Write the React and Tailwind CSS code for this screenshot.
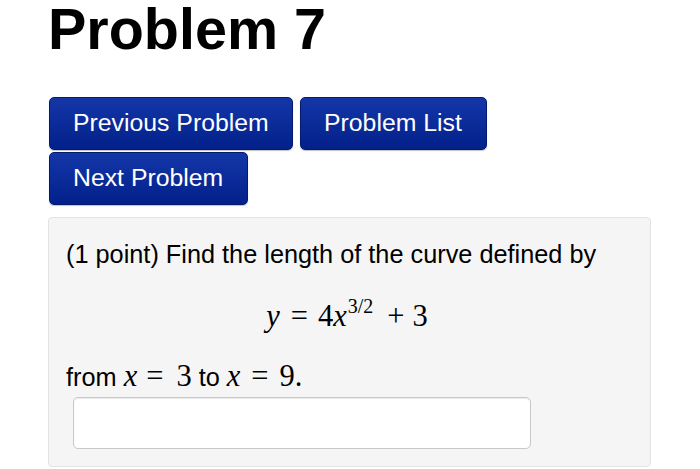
export default function App() {
  const btn =
    "h-[53px] px-[23px] rounded-[5px] border border-[#021a70] bg-gradient-to-b from-[#1436a8] to-[#03208a] text-white text-[24.8px] leading-none shadow-[0_1px_1px_rgba(0,0,0,0.25)]";
  const math = "font-['Liberation_Serif','Times_New_Roman',serif] text-[30.5px]";
  return (
    <div className="w-[700px] h-[469px] bg-white overflow-hidden font-['Liberation_Sans',Arial,sans-serif]">
      <h1 className="pl-[48px] text-[57.5px] font-bold leading-[58px] text-black">Problem 7</h1>

      <div className="pl-[49px] mt-[39px] flex flex-col gap-[2px]">
        <div className="flex gap-[7px]">
          <button className={btn + " w-[244px] text-left"}>Previous Problem</button>
          <button className={btn + " w-[187px] text-left"}>Problem List</button>
        </div>
        <div className="flex">
          <button className={btn + " w-[199px] text-left"}>Next Problem</button>
        </div>
      </div>

      <div className="ml-[48px] mt-[12px] w-[603px] h-[250px] rounded-[4px] border border-[#e3e3e3] bg-[#f5f5f5] pl-[17px] pt-[22px]">
        <p className="text-[25.3px] leading-[28px] text-black">(1 point) Find the length of the curve defined by</p>

        <div className={"mt-[31px] flex justify-center pr-[22px] leading-[34px] text-black " + math}>
          <span className="flex items-baseline">
            <i>y</i>
            <span className="ml-[11px] mr-[10px]">=</span>
            <span>4</span>
            <i>x</i>
            <span className="text-[20px] relative top-[-13px] ml-[1px]">3/2</span>
            <span className="ml-[14px] mr-[8px]">+</span>
            <span>3</span>
          </span>
        </div>

        <p className="mt-[24px] text-[25.3px] leading-[32px] text-black flex items-baseline">
          <span>from&nbsp;</span>
          <i className={math}>x</i>
          <span className={math + " ml-[9px] mr-[13px]"}>=</span>
          <span className={math}>3</span>
          <span>&nbsp;to&nbsp;</span>
          <i className={math}>x</i>
          <span className={math + " ml-[11px] mr-[11px]"}>=</span>
          <span className={math}>9.</span>
        </p>

        <div className="mt-[4px] ml-[7px] w-[458px] h-[52px] rounded-[5px] border border-[#c8c8c8] bg-white shadow-[inset_0_1px_1px_rgba(0,0,0,0.08)]" />
      </div>
    </div>
  );
}
